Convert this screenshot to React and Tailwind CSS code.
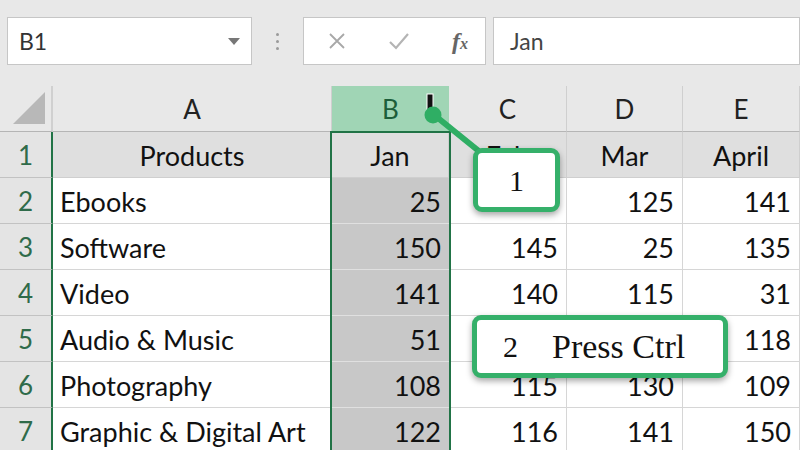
import React from "react";

const rows = [
  ["Products", "Jan", "Feb", "Mar", "April"],
  ["Ebooks", "25", "", "125", "141"],
  ["Software", "150", "145", "25", "135"],
  ["Video", "141", "140", "115", "31"],
  ["Audio & Music", "51", "", "", "118"],
  ["Photography", "108", "115", "130", "109"],
  ["Graphic & Digital Art", "122", "116", "141", "150"],
];

const cols = ["A", "B", "C", "D", "E"];
const font = { fontFamily: "Lato, 'Open Sans', sans-serif" };
const serif = { fontFamily: "'Liberation Serif', 'DejaVu Serif', serif" };

export default function App() {
  return (
    <div className="relative w-[800px] h-[450px] overflow-hidden bg-white" style={font}>
      {/* Toolbar */}
      <div className="h-[86px] bg-[#e8e8e8] flex items-start pt-[17px] pl-[7px]">
        <div className="w-[245px] h-[48px] bg-white border border-[#c6c6c6] flex items-center justify-between pl-[11px] pr-[10px]">
          <span className="text-[23px] text-[#333]">B1</span>
          <svg width="14" height="9" viewBox="0 0 14 9"><path d="M1 1 L13 1 L7 8 Z" fill="#777" /></svg>
        </div>
        <div className="w-[51px] h-[48px] flex flex-col items-center justify-center gap-[4px]">
          <span className="w-[3px] h-[3px] rounded-full bg-[#9a9a9a]" />
          <span className="w-[3px] h-[3px] rounded-full bg-[#9a9a9a]" />
          <span className="w-[3px] h-[3px] rounded-full bg-[#9a9a9a]" />
        </div>
        <div className="w-[183px] h-[48px] bg-white border border-[#c6c6c6] flex items-center pl-[24px] gap-[42px]">
          <svg width="18" height="18" viewBox="0 0 18 18"><path d="M2 2 L16 16 M16 2 L2 16" stroke="#a8a8a8" strokeWidth="1.8" /></svg>
          <svg width="22" height="18" viewBox="0 0 22 18"><path d="M2 10 L8 16 L20 2" stroke="#b4b4b4" strokeWidth="2.2" fill="none" /></svg>
          <span className="text-[24px] italic text-[#666] font-bold leading-none" style={serif}>f<span className="text-[16px]">x</span></span>
        </div>
        <div className="ml-[7px] flex-1 h-[48px] bg-white border border-[#c6c6c6] flex items-center pl-[16px]">
          <span className="text-[23px] text-[#444]">Jan</span>
        </div>
      </div>

      {/* Grid */}
      <div className="grid grid-cols-[53px_279px_117px_118px_116px_117px]">
        <div className="h-[46px] bg-[#e8e8e8] border-b border-[#b5b5b5] border-r-2 border-r-[#d0d0d0] flex items-end justify-end pr-[6px] pb-[7px]">
          <svg width="32" height="32" viewBox="0 0 32 32"><path d="M32 0 L32 32 L0 32 Z" fill="#b8b8b8" /></svg>
        </div>
        {cols.map((c) => (
          <div
            key={c}
            className={
              c === "B"
                ? "h-[46px] bg-[#a0d5b5] border-b border-[#b5b5b5] flex items-center justify-center text-[26px] text-[#1d5e3a]"
                : "h-[46px] bg-[#e8e8e8] border-b border-[#b5b5b5] border-r border-r-[#cfcfcf] flex items-center justify-center text-[26px] text-[#222]"
            }
          >
            <span className="pt-[2px]">{c}</span>
          </div>
        ))}

        {rows.map((r, i) => (
          <React.Fragment key={i}>
            <div className="h-[46px] bg-[#e4e4e4] border-b border-[#c2c2c2] border-r-2 border-r-[#217346] flex items-center justify-center text-[26px] text-[#2f6b4a]">
              <span className="pt-[2px]">{i + 1}</span>
            </div>
            {r.map((v, j) => {
              const header = i === 0;
              const selected = j === 1 && !header;
              let cls = "h-[46px] flex items-center text-[27px] text-[#111] ";
              if (header) cls += "bg-[#dfdfdf] border-b border-r border-[#cfcfcf] justify-center ";
              else if (selected) cls += "bg-[#c8c8c8] border-b border-[#e0e0e0] justify-end pr-[8px] ";
              else cls += "bg-white border-b border-r border-[#d6d6d6] " + (j === 0 ? "justify-start pl-[7px] " : "justify-end pr-[8px] ");
              return (
                <div key={j} className={cls}>
                  <span className="pt-[3px]">{v}</span>
                </div>
              );
            })}
          </React.Fragment>
        ))}
      </div>

      {/* Selection border for column B */}
      <div className="absolute left-[330px] top-[131px] w-[121px] h-[330px] border-2 border-[#217346]" />

      {/* Connector line and dot */}
      <svg className="absolute left-0 top-0" width="800" height="450">
        <rect x="427" y="94" width="6" height="16" fill="#111" stroke="#fff" strokeWidth="1" />
        <line x1="433" y1="114" x2="480" y2="152" stroke="#2fae64" strokeWidth="6" strokeLinecap="round" />
        <circle cx="433" cy="115" r="8.5" fill="#2fae64" />
      </svg>

      {/* Callout 1 */}
      <div className="absolute left-[473px] top-[148px] w-[87px] h-[64px] bg-white border-[5px] border-[#35b06a] rounded-[9px] shadow-[0_3px_6px_rgba(0,0,0,0.35)] flex items-center justify-center">
        <span className="text-[30px] text-[#111]" style={serif}>1</span>
      </div>

      {/* Callout 2 */}
      <div className="absolute left-[472px] top-[315px] w-[256px] h-[63px] bg-white border-[5px] border-[#35b06a] rounded-[9px] shadow-[0_3px_6px_rgba(0,0,0,0.35)] flex items-center pl-[26px]">
        <span className="text-[30px] text-[#111]" style={serif}>2</span>
        <span className="ml-[34px] text-[34px] text-[#111]" style={serif}>Press Ctrl</span>
      </div>
    </div>
  );
}
